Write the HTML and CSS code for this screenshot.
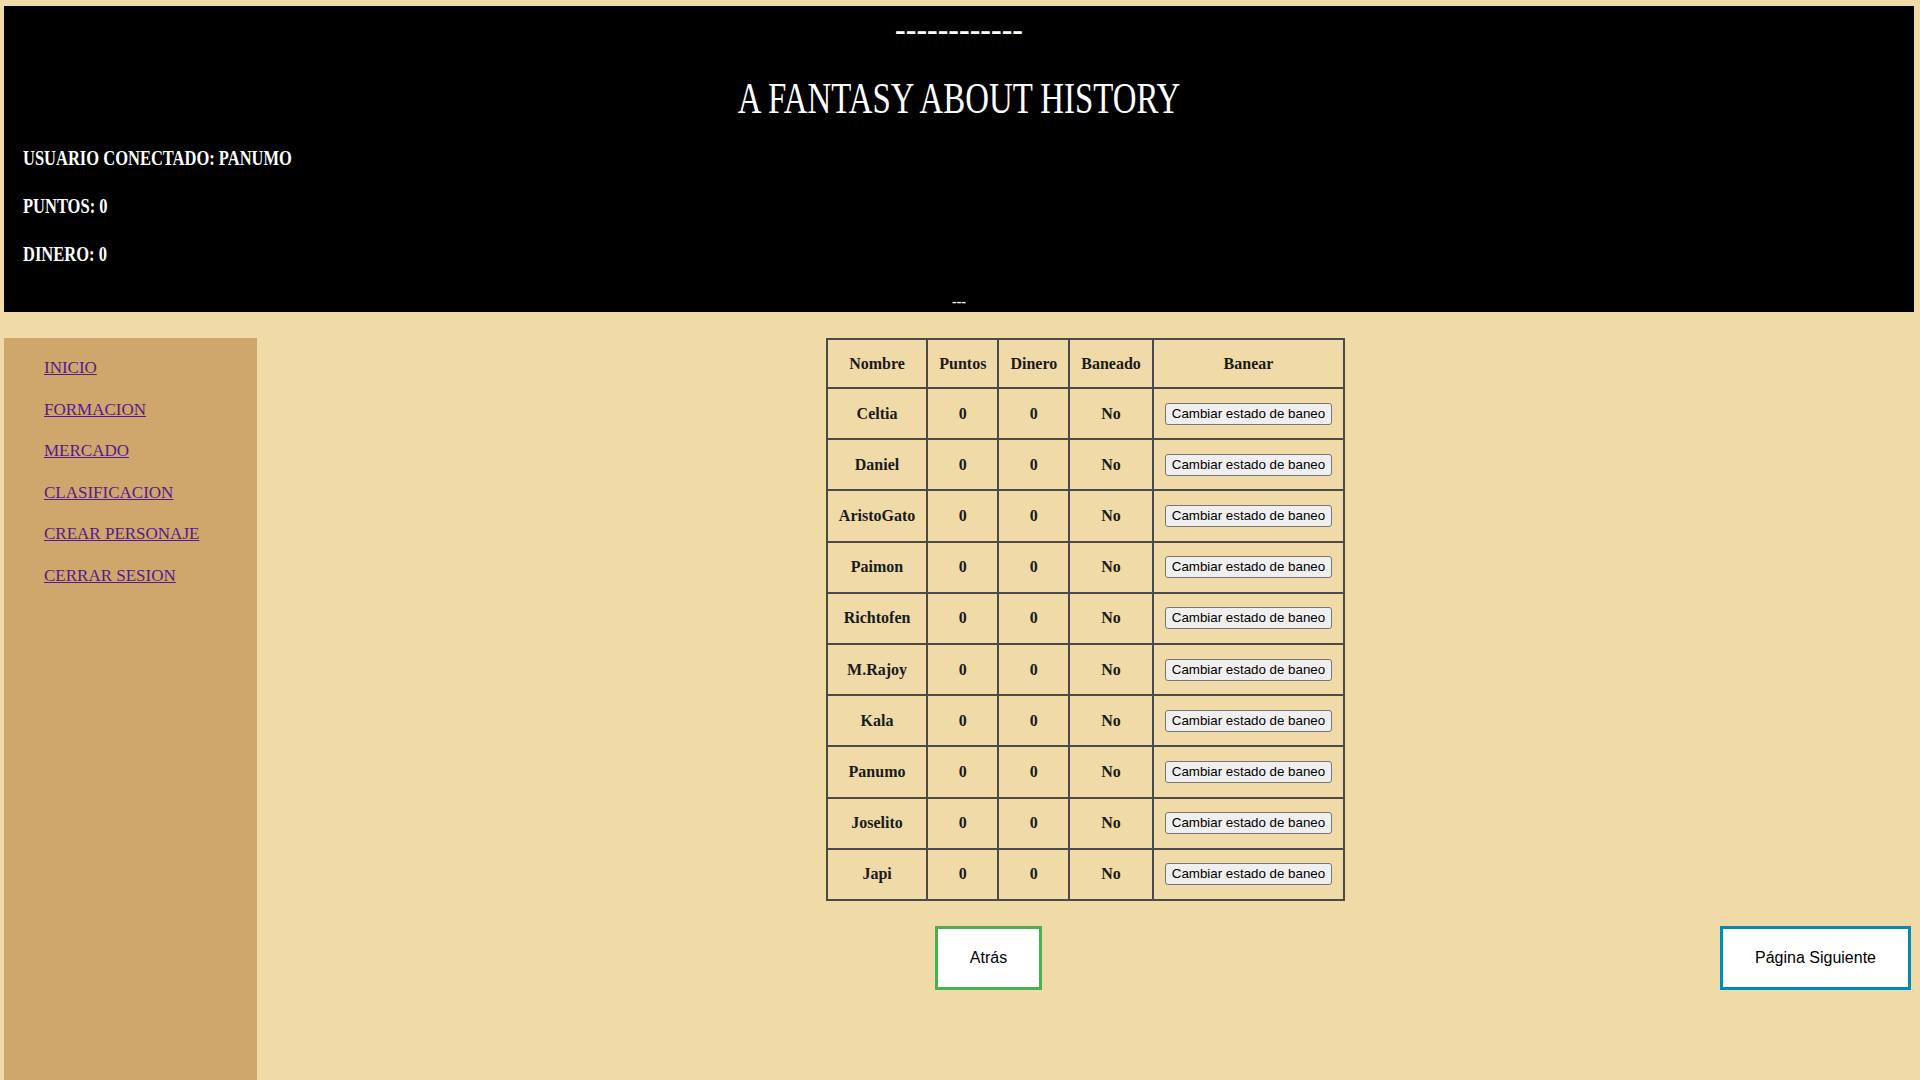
FILE: index.html
```html
<!DOCTYPE html>
<html lang="es">
<head>
<meta charset="utf-8">
<title>A Fantasy About History</title>
<link rel="stylesheet" href="styles.css">
</head>
<body>
<header class="top">
  <div class="dashes"><span>------------</span></div>
  <h1 class="title"><span>A FANTASY ABOUT HISTORY</span></h1>
  <p class="info"><span>USUARIO CONECTADO: PANUMO</span></p>
  <p class="info"><span>PUNTOS: 0</span></p>
  <p class="info"><span>DINERO: 0</span></p>
  <div class="dashes small"><span>---</span></div>
</header>
<div class="layout">
  <nav class="sidebar">
    <a href="#">INICIO</a>
    <a href="#">FORMACION</a>
    <a href="#">MERCADO</a>
    <a href="#">CLASIFICACION</a>
    <a href="#">CREAR PERSONAJE</a>
    <a href="#">CERRAR SESION</a>
  </nav>
  <main class="main">
    <table class="users">
      <thead>
        <tr><th>Nombre</th><th>Puntos</th><th>Dinero</th><th>Baneado</th><th class="ban">Banear</th></tr>
      </thead>
      <tbody>
        <tr><td>Celtia</td><td>0</td><td>0</td><td>No</td><td><button class="ban-btn">Cambiar estado de baneo</button></td></tr>
        <tr><td>Daniel</td><td>0</td><td>0</td><td>No</td><td><button class="ban-btn">Cambiar estado de baneo</button></td></tr>
        <tr><td>AristoGato</td><td>0</td><td>0</td><td>No</td><td><button class="ban-btn">Cambiar estado de baneo</button></td></tr>
        <tr><td>Paimon</td><td>0</td><td>0</td><td>No</td><td><button class="ban-btn">Cambiar estado de baneo</button></td></tr>
        <tr><td>Richtofen</td><td>0</td><td>0</td><td>No</td><td><button class="ban-btn">Cambiar estado de baneo</button></td></tr>
        <tr><td>M.Rajoy</td><td>0</td><td>0</td><td>No</td><td><button class="ban-btn">Cambiar estado de baneo</button></td></tr>
        <tr><td>Kala</td><td>0</td><td>0</td><td>No</td><td><button class="ban-btn">Cambiar estado de baneo</button></td></tr>
        <tr><td>Panumo</td><td>0</td><td>0</td><td>No</td><td><button class="ban-btn">Cambiar estado de baneo</button></td></tr>
        <tr><td>Joselito</td><td>0</td><td>0</td><td>No</td><td><button class="ban-btn">Cambiar estado de baneo</button></td></tr>
        <tr><td>Japi</td><td>0</td><td>0</td><td>No</td><td><button class="ban-btn">Cambiar estado de baneo</button></td></tr>
      </tbody>
    </table>
    <div class="pager">
      <div class="pager-left"><button class="pbtn back">Atrás</button></div>
      <button class="pbtn next">Página Siguiente</button>
    </div>
  </main>
</div>
</body>
</html>
```
FILE: styles.css
```css
html, body {
  margin: 0;
  padding: 0;
  background: #F0DAA8;
}

body {
  padding: 6px 6px 0 4px;
  font-family: "Liberation Serif", "Times New Roman", serif;
}

.top {
  background: #000;
  color: #fff;
  height: 306px;
  box-sizing: border-box;
  padding: 13px 0 0 19px;
}

.dashes {
  text-align: center;
  font-size: 32px;
  font-weight: bold;
  line-height: 20px;
  height: 20px;
  margin-left: -19px;
}

.dashes span {
  display: inline-block;
}

.dashes.small {
  font-size: 14px;
  line-height: 18px;
  height: 18px;
  margin-top: 27px;
}

.title {
  margin: 34px 0 0 -19px;
  text-align: center;
  font-size: 45px;
  font-weight: normal;
  line-height: 50px;
  height: 50px;
}

.title span {
  display: inline-block;
  transform: scaleX(0.73);
  transform-origin: center;
}

.info {
  margin: 23px 0 0 0;
  font-size: 22px;
  font-weight: bold;
  line-height: 24px;
  height: 24px;
}

.info + .info {
  margin-top: 24px;
}

.info span {
  display: inline-block;
  transform: scaleX(0.75);
  transform-origin: left center;
  white-space: nowrap;
}

.layout {
  display: flex;
  margin-top: 26px;
  align-items: flex-start;
}

.sidebar {
  width: 253px;
  min-height: 760px;
  background: #CFA66B;
  box-sizing: border-box;
  padding: 20px 0 0 40px;
  display: flex;
  flex-direction: column;
  align-items: flex-start;
  gap: 21.6px;
}

.sidebar a {
  color: #551A8B;
  font-size: 17px;
  line-height: 20px;
  text-decoration: underline;
}

.main {
  flex: 1;
  display: flex;
  flex-direction: column;
  align-items: center;
}

.users {
  border-collapse: collapse;
  font-family: "Liberation Serif", "Times New Roman", serif;
  font-size: 16px;
  font-weight: bold;
  color: #1a1a1a;
}

.users th, .users td {
  border: 2px solid #4a4a4a;
  padding: 0 11px;
  text-align: center;
  vertical-align: middle;
}

.users thead tr {
  height: 49px;
}

.users tbody tr {
  height: 51.2px;
}

.ban-btn {
  font-family: "Liberation Sans", Arial, sans-serif;
  font-size: 13.33px;
  color: #000;
  background: #efefef;
  border: 1px solid #767676;
  border-radius: 3px;
  padding: 2px 6px;
  line-height: 16px;
}

.pager {
  display: flex;
  align-self: stretch;
  margin-top: 25px;
  padding-right: 3px;
}

.pager-left {
  flex: 1;
  display: flex;
  justify-content: center;
}

.pbtn {
  background: #fff;
  color: #000;
  font-family: "Liberation Sans", Arial, sans-serif;
  font-size: 16px;
  line-height: 18px;
  padding: 20px 32px;
  border: 3px solid;
}

.back {
  border-color: #4CAF50;
}

.next {
  border-color: #008CBA;
}
```
